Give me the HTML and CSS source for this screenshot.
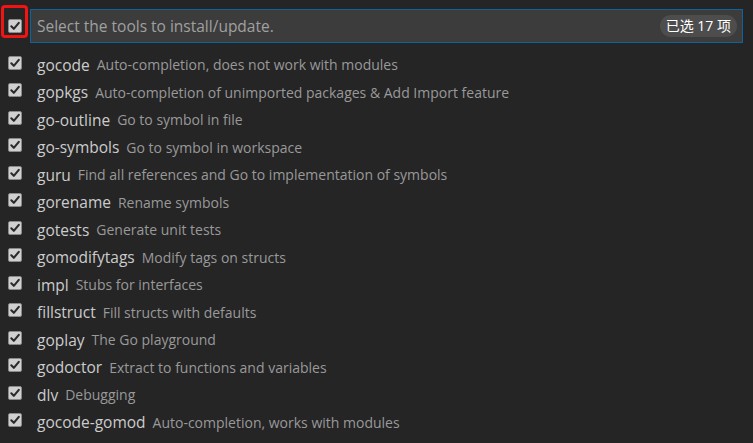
FILE: index.html
```html
<!DOCTYPE html>
<html>
<head>
<meta charset="utf-8">
<link rel="stylesheet" href="styles.css">
</head>
<body>
<div class="quick">
  <div class="header">
    <div class="check-wrap">
      <span class="cb"><svg viewBox="0 0 14 14" width="14" height="14"><rect x="0.5" y="0.5" width="13" height="13" rx="1.5" fill="#d0d0d0" stroke="#8a8a8a"/><path d="M3.3 7.3 L5.8 9.8 L10.8 3.8" fill="none" stroke="#2b2b2b" stroke-width="2.1" stroke-linecap="round" stroke-linejoin="round"/></svg></span>
      <span class="highlight"></span>
    </div>
    <div class="input">
      <span class="placeholder">Select the tools to install/update.</span>
      <span class="badge">已选 17 项</span>
    </div>
  </div>
  <ul class="list">
    <li><span class="cb"><svg viewBox="0 0 14 14" width="14" height="14"><rect x="0.5" y="0.5" width="13" height="13" rx="1.5" fill="#d0d0d0" stroke="#8a8a8a"/><path d="M3.3 7.3 L5.8 9.8 L10.8 3.8" fill="none" stroke="#2b2b2b" stroke-width="2.1" stroke-linecap="round" stroke-linejoin="round"/></svg></span><span class="name">gocode</span><span class="desc">Auto-completion, does not work with modules</span></li>
    <li><span class="cb"><svg viewBox="0 0 14 14" width="14" height="14"><rect x="0.5" y="0.5" width="13" height="13" rx="1.5" fill="#d0d0d0" stroke="#8a8a8a"/><path d="M3.3 7.3 L5.8 9.8 L10.8 3.8" fill="none" stroke="#2b2b2b" stroke-width="2.1" stroke-linecap="round" stroke-linejoin="round"/></svg></span><span class="name">gopkgs</span><span class="desc">Auto-completion of unimported packages &amp; Add Import feature</span></li>
    <li><span class="cb"><svg viewBox="0 0 14 14" width="14" height="14"><rect x="0.5" y="0.5" width="13" height="13" rx="1.5" fill="#d0d0d0" stroke="#8a8a8a"/><path d="M3.3 7.3 L5.8 9.8 L10.8 3.8" fill="none" stroke="#2b2b2b" stroke-width="2.1" stroke-linecap="round" stroke-linejoin="round"/></svg></span><span class="name">go-outline</span><span class="desc">Go to symbol in file</span></li>
    <li><span class="cb"><svg viewBox="0 0 14 14" width="14" height="14"><rect x="0.5" y="0.5" width="13" height="13" rx="1.5" fill="#d0d0d0" stroke="#8a8a8a"/><path d="M3.3 7.3 L5.8 9.8 L10.8 3.8" fill="none" stroke="#2b2b2b" stroke-width="2.1" stroke-linecap="round" stroke-linejoin="round"/></svg></span><span class="name">go-symbols</span><span class="desc">Go to symbol in workspace</span></li>
    <li><span class="cb"><svg viewBox="0 0 14 14" width="14" height="14"><rect x="0.5" y="0.5" width="13" height="13" rx="1.5" fill="#d0d0d0" stroke="#8a8a8a"/><path d="M3.3 7.3 L5.8 9.8 L10.8 3.8" fill="none" stroke="#2b2b2b" stroke-width="2.1" stroke-linecap="round" stroke-linejoin="round"/></svg></span><span class="name">guru</span><span class="desc">Find all references and Go to implementation of symbols</span></li>
    <li><span class="cb"><svg viewBox="0 0 14 14" width="14" height="14"><rect x="0.5" y="0.5" width="13" height="13" rx="1.5" fill="#d0d0d0" stroke="#8a8a8a"/><path d="M3.3 7.3 L5.8 9.8 L10.8 3.8" fill="none" stroke="#2b2b2b" stroke-width="2.1" stroke-linecap="round" stroke-linejoin="round"/></svg></span><span class="name">gorename</span><span class="desc">Rename symbols</span></li>
    <li><span class="cb"><svg viewBox="0 0 14 14" width="14" height="14"><rect x="0.5" y="0.5" width="13" height="13" rx="1.5" fill="#d0d0d0" stroke="#8a8a8a"/><path d="M3.3 7.3 L5.8 9.8 L10.8 3.8" fill="none" stroke="#2b2b2b" stroke-width="2.1" stroke-linecap="round" stroke-linejoin="round"/></svg></span><span class="name">gotests</span><span class="desc">Generate unit tests</span></li>
    <li><span class="cb"><svg viewBox="0 0 14 14" width="14" height="14"><rect x="0.5" y="0.5" width="13" height="13" rx="1.5" fill="#d0d0d0" stroke="#8a8a8a"/><path d="M3.3 7.3 L5.8 9.8 L10.8 3.8" fill="none" stroke="#2b2b2b" stroke-width="2.1" stroke-linecap="round" stroke-linejoin="round"/></svg></span><span class="name">gomodifytags</span><span class="desc">Modify tags on structs</span></li>
    <li><span class="cb"><svg viewBox="0 0 14 14" width="14" height="14"><rect x="0.5" y="0.5" width="13" height="13" rx="1.5" fill="#d0d0d0" stroke="#8a8a8a"/><path d="M3.3 7.3 L5.8 9.8 L10.8 3.8" fill="none" stroke="#2b2b2b" stroke-width="2.1" stroke-linecap="round" stroke-linejoin="round"/></svg></span><span class="name">impl</span><span class="desc">Stubs for interfaces</span></li>
    <li><span class="cb"><svg viewBox="0 0 14 14" width="14" height="14"><rect x="0.5" y="0.5" width="13" height="13" rx="1.5" fill="#d0d0d0" stroke="#8a8a8a"/><path d="M3.3 7.3 L5.8 9.8 L10.8 3.8" fill="none" stroke="#2b2b2b" stroke-width="2.1" stroke-linecap="round" stroke-linejoin="round"/></svg></span><span class="name">fillstruct</span><span class="desc">Fill structs with defaults</span></li>
    <li><span class="cb"><svg viewBox="0 0 14 14" width="14" height="14"><rect x="0.5" y="0.5" width="13" height="13" rx="1.5" fill="#d0d0d0" stroke="#8a8a8a"/><path d="M3.3 7.3 L5.8 9.8 L10.8 3.8" fill="none" stroke="#2b2b2b" stroke-width="2.1" stroke-linecap="round" stroke-linejoin="round"/></svg></span><span class="name">goplay</span><span class="desc">The Go playground</span></li>
    <li><span class="cb"><svg viewBox="0 0 14 14" width="14" height="14"><rect x="0.5" y="0.5" width="13" height="13" rx="1.5" fill="#d0d0d0" stroke="#8a8a8a"/><path d="M3.3 7.3 L5.8 9.8 L10.8 3.8" fill="none" stroke="#2b2b2b" stroke-width="2.1" stroke-linecap="round" stroke-linejoin="round"/></svg></span><span class="name">godoctor</span><span class="desc">Extract to functions and variables</span></li>
    <li><span class="cb"><svg viewBox="0 0 14 14" width="14" height="14"><rect x="0.5" y="0.5" width="13" height="13" rx="1.5" fill="#d0d0d0" stroke="#8a8a8a"/><path d="M3.3 7.3 L5.8 9.8 L10.8 3.8" fill="none" stroke="#2b2b2b" stroke-width="2.1" stroke-linecap="round" stroke-linejoin="round"/></svg></span><span class="name">dlv</span><span class="desc">Debugging</span></li>
    <li><span class="cb"><svg viewBox="0 0 14 14" width="14" height="14"><rect x="0.5" y="0.5" width="13" height="13" rx="1.5" fill="#d0d0d0" stroke="#8a8a8a"/><path d="M3.3 7.3 L5.8 9.8 L10.8 3.8" fill="none" stroke="#2b2b2b" stroke-width="2.1" stroke-linecap="round" stroke-linejoin="round"/></svg></span><span class="name">gocode-gomod</span><span class="desc">Auto-completion, works with modules</span></li>
  </ul>
</div>
</body>
</html>
```
FILE: styles.css
```css
html, body {
  margin: 0;
  padding: 0;
  background: #252526;
  height: 100%;
  overflow: hidden;
}
.quick {
  font-family: "Open Sans", "Noto Sans CJK SC", sans-serif;
  color: #cccccc;
}
.header {
  display: flex;
  align-items: center;
  padding: 9px 10px 0 8px;
  gap: 8px;
}
.check-wrap {
  position: relative;
  width: 14px;
  height: 34px;
  display: flex;
  align-items: center;
}
.cb {
  display: block;
  width: 14px;
  height: 14px;
  flex: none;
}
.cb svg { display: block; }
.highlight {
  position: absolute;
  left: -7px;
  top: -4px;
  width: 27px;
  height: 33px;
  border: 3px solid #f01414;
  border-radius: 4px;
  box-sizing: border-box;
}
.input {
  flex: 1;
  height: 34px;
  box-sizing: border-box;
  border: 1px solid #0e639c;
  background: #3c3c3c;
  display: flex;
  align-items: center;
  justify-content: space-between;
  padding: 0 5px 0 6px;
}
.placeholder {
  font-size: 15.5px;
  color: #a0a0a0;
}
.badge {
  font-size: 14px;
  color: #ffffff;
  background: #4d4d4d;
  border-radius: 11px;
  padding: 1px 6px 1px 6px;
  line-height: 20px;
}
.list {
  list-style: none;
  margin: 0;
  padding: 8px 0 0 0;
}
.list li {
  height: 27.5px;
  display: flex;
  align-items: center;
  padding-left: 8px;
  white-space: nowrap;
}
.list .cb {
  margin-right: 15px;
  margin-top: -4px;
}
.name {
  font-size: 15.5px;
  color: #cccccc;
}
.desc {
  font-size: 14px;
  color: #999999;
  margin-left: 7px;
}
```
